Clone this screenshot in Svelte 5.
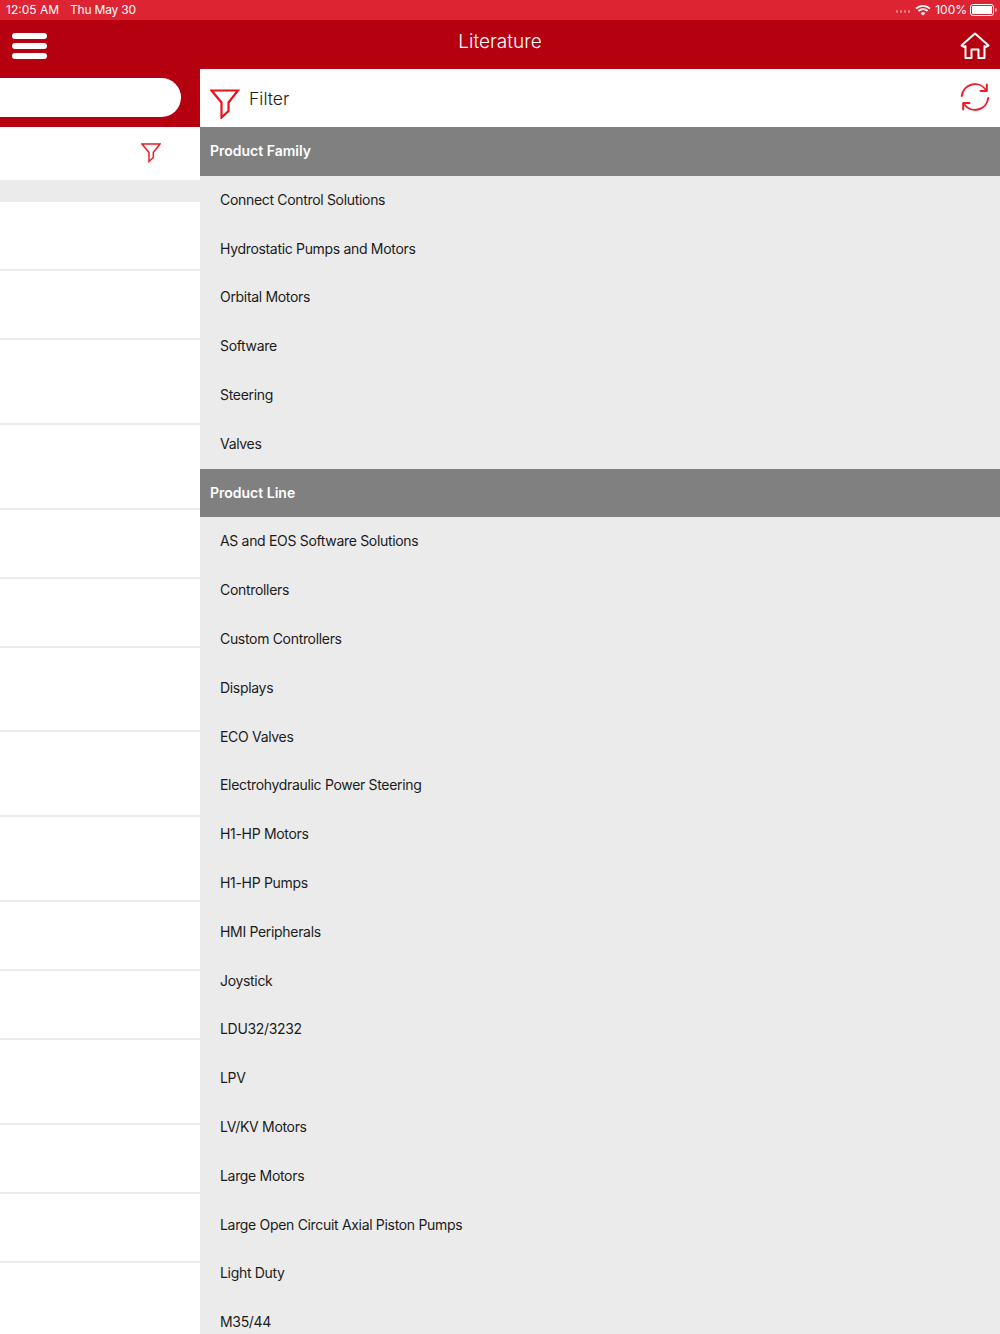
<script lang="ts">
	const leftRows = [67, 67, 83, 83, 67, 67, 82, 83, 83, 67, 67, 83, 67, 67, 80];
	const sections = [
		{
			title: 'Product Family',
			items: ['Connect Control Solutions', 'Hydrostatic Pumps and Motors', 'Orbital Motors', 'Software', 'Steering', 'Valves']
		},
		{
			title: 'Product Line',
			items: [
				'AS and EOS Software Solutions', 'Controllers', 'Custom Controllers', 'Displays', 'ECO Valves',
				'Electrohydraulic Power Steering', 'H1-HP Motors', 'H1-HP Pumps', 'HMI Peripherals', 'Joystick',
				'LDU32/3232', 'LPV', 'LV/KV Motors', 'Large Motors', 'Large Open Circuit Axial Piston Pumps',
				'Light Duty', 'M35/44'
			]
		}
	];
</script>

<div class="page">
	<div class="status">
		<div class="clock"><span>12:05 AM</span><span class="date">Thu May 30</span></div>
		<div class="status-right">
			<div class="dots"><i></i><i></i><i></i><i></i></div>
			<svg class="wifi" width="16" height="12" viewBox="0 0 16 12">
				<path d="M1 4.6C5 .9 11 .9 15 4.6" fill="none" stroke="#fff" stroke-width="1.9" />
				<path d="M3.5 7C6.1 4.7 9.9 4.7 12.5 7" fill="none" stroke="#fff" stroke-width="1.9" />
				<path d="M5.7 9.2C7 8 9 8 10.3 9.2L8 11.6Z" fill="#fff" />
			</svg>
			<span class="pct">100%</span>
			<div class="battery"><div class="charge"></div></div>
			<div class="nub"></div>
		</div>
	</div>

	<header>
		<div class="burger"><span></span><span></span><span></span></div>
		<div class="title">Literature</div>
		<svg class="home" width="30" height="28" viewBox="0 0 30 28" fill="none" stroke="#fff" stroke-width="2" stroke-linejoin="round" stroke-linecap="round">
			<path d="M1.5 13.5L15 1.5L28.5 13.5L25.5 15L24.5 14V26H18.5V17.5H11.5V26H5.5V14L4.5 15Z" />
		</svg>
	</header>

	<div class="main">
		<aside>
			<div class="search"><div class="pill"></div></div>
			<div class="left-filter">
				<svg width="20" height="20" viewBox="0 0 20 20" fill="none" stroke="#ee1c25" stroke-width="1.5">
					<path d="M1 1H19L12.3 9.5V14.5L8 18.5V9.5Z" />
				</svg>
			</div>
			<div class="rows">
				{#each leftRows as h}
					<div class="row" style="height: {h}px"></div>
				{/each}
			</div>
		</aside>

		<section class="panel">
			<div class="filter-bar">
				<svg class="funnel" width="30" height="30" viewBox="0 0 30 30" fill="none" stroke="#ee0f18" stroke-width="2.2">
					<path d="M1.5 1.5H28L18.5 13.5V22L11.5 28.5V13.5Z" />
				</svg>
				<span class="filter-label">Filter</span>
				<svg class="refresh" width="32" height="32" viewBox="0 0 32 32" fill="none" stroke="#ee1c2b" stroke-width="2" stroke-linecap="round" stroke-linejoin="round">
					<path d="M2.8 15A13.3 13.3 0 0 1 27 9" />
					<path d="M27.8 3.5V10H21.5" />
					<path d="M29.2 17A13.3 13.3 0 0 1 5 23" />
					<path d="M4.2 28.5V22H10.5" />
				</svg>
			</div>
			{#each sections as section}
				<div class="section-title">{section.title}</div>
				{#each section.items as item}
					<div class="item">{item}</div>
				{/each}
			{/each}
		</section>
	</div>
</div>

<style>
	:global(body) { margin: 0; background: #ebebeb; }
	.page { width: 1000px; height: 1334px; overflow: hidden; display: flex; flex-direction: column; font-family: Inter, "Liberation Sans", sans-serif; }

	.status { height: 20px; flex: none; background: #dc2433; color: #fff; font-size: 12px; line-height: 19px; display: flex; align-items: flex-start; justify-content: space-between; padding: 0 3px 0 6px; }
	.clock { display: flex; gap: 11px; }
	.date { letter-spacing: -0.2px; }
	.status-right { display: flex; align-items: center; height: 19px; }
	.dots { display: flex; gap: 1.5px; margin-right: 5px; margin-top: 4px; }
	.dots i { width: 2.5px; height: 2.5px; border-radius: 50%; background: rgba(255, 255, 255, 0.4); }
	.wifi { margin-right: 4px; }
	.pct { margin-right: 3px; }
	.battery { width: 24px; height: 12px; box-sizing: border-box; border: 1px solid #fff; border-radius: 3px; padding: 1px; }
	.charge { height: 100%; background: #fff; border-radius: 1px; }
	.nub { width: 2px; height: 4px; background: rgba(255, 255, 255, 0.6); border-radius: 0 2px 2px 0; margin-left: 1px; }

	header { height: 49px; flex: none; background: #b5000f; display: flex; align-items: center; justify-content: space-between; position: relative; padding: 0 10px 0 12px; }
	.burger { display: flex; flex-direction: column; gap: 4.5px; width: 35px; margin-top: 3px; }
	.burger span { height: 5.5px; background: #fff; border-radius: 3px; }
	.title { position: absolute; left: 0; right: 0; top: 9px; text-align: center; color: #fff; font-size: 19px; font-weight: 300; line-height: 26px; }
	.home { margin-top: 2px; }

	.main { flex: 1; display: grid; grid-template-columns: 200px 1fr; min-height: 0; }
	aside { display: flex; flex-direction: column; background: #ebebeb; min-height: 0; }
	.search { height: 58px; flex: none; background: #b5000f; padding: 9px 19px 0 0; box-sizing: border-box; }
	.pill { height: 39px; background: #fff; border-radius: 0 20px 20px 0; }
	.left-filter { height: 53px; flex: none; background: #fff; display: flex; justify-content: flex-end; padding: 16px 39px 0 0; box-sizing: border-box; }
	.left-filter svg { display: block; }
	.rows { margin-top: 22px; display: flex; flex-direction: column; gap: 2px; }
	.row { background: #fff; flex: none; }

	.panel { background: #ebebeb; overflow: hidden; }
	.filter-bar { height: 58px; background: #fff; display: flex; align-items: center; padding: 0 9px 0 10px; box-sizing: border-box; }
	.funnel { margin-top: 11px; }
	.filter-label { margin: 1px 0 0 9px; font-size: 17.5px; font-weight: 300; color: #222; line-height: 24px; }
	.refresh { margin-left: auto; margin-top: -2px; }
	.section-title { height: 48.8px; background: #808080; color: #fff; font-size: 14px; font-weight: 600; line-height: 48px; padding-left: 10px; }
	.item { height: 48.8px; line-height: 48px; padding-left: 20px; font-size: 14px; letter-spacing: -0.32px; color: #1c1c1c; }
</style>
